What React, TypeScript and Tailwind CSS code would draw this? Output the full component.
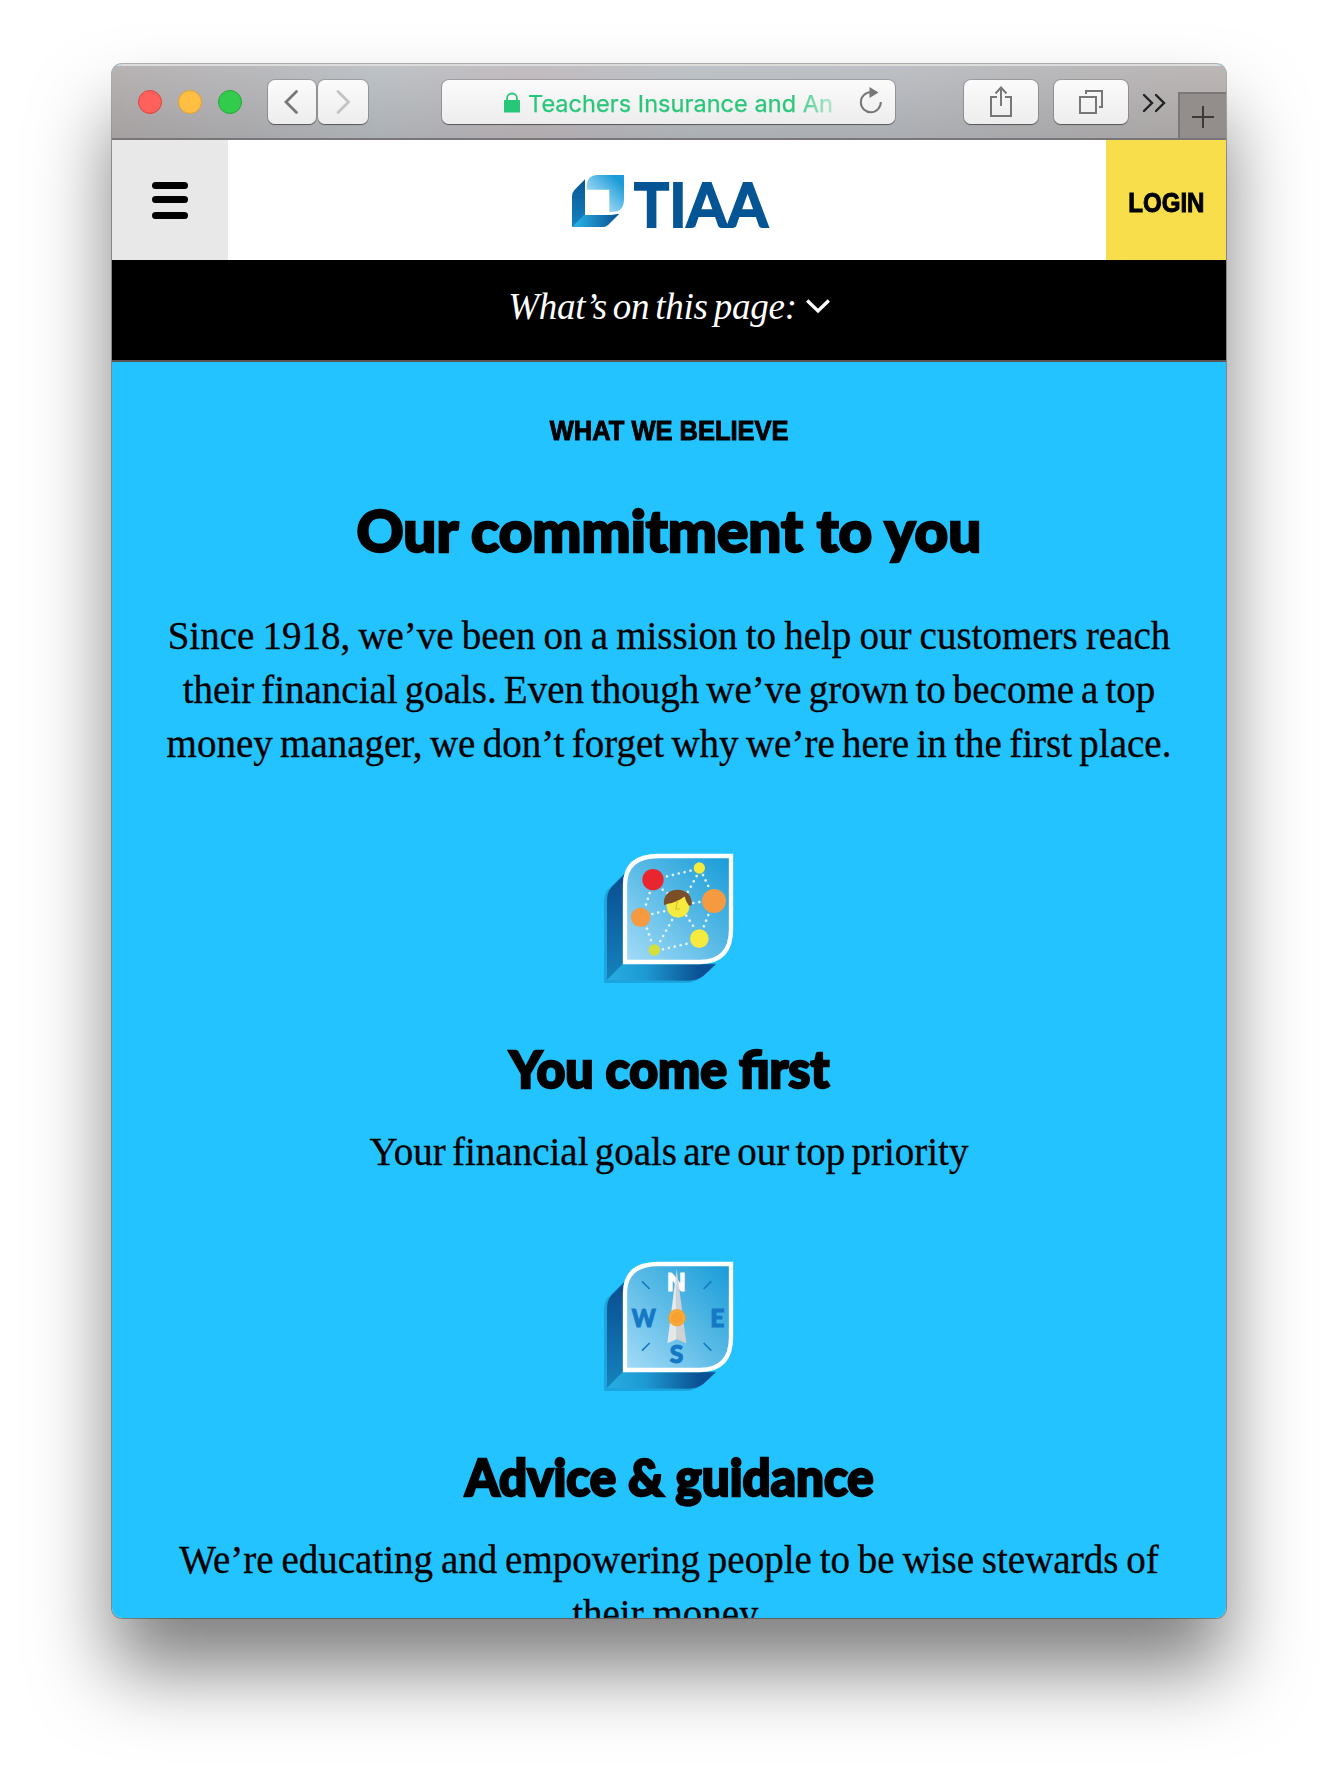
import React from "react";

function IconFrame({ id, children }: { id: string; children: React.ReactNode }) {
  return (
    <svg width="160" height="160" viewBox="0 0 480 480" className="block">
      <defs>
        <linearGradient id={id + "face"} x1="0" y1="1" x2="1" y2="0">
          <stop offset="0" stopColor="#a5dcf8" />
          <stop offset="0.5" stopColor="#5bbbe6" />
          <stop offset="1" stopColor="#159bd8" />
        </linearGradient>
        <linearGradient id={id + "side"} x1="0" y1="0" x2="0" y2="1">
          <stop offset="0.1" stopColor="#0a5192" />
          <stop offset="1" stopColor="#1583bd" />
        </linearGradient>
        <linearGradient id={id + "base"} x1="0" y1="0" x2="1" y2="0">
          <stop offset="0" stopColor="#27ade3" />
          <stop offset="0.35" stopColor="#1d9ad2" />
          <stop offset="0.85" stopColor="#0a5192" />
        </linearGradient>
      </defs>
      <path d="M42 429V185Q42 160 56 146L110 94V370H378L340 405Q318 429 285 429Z" fill="#1aa5dc" />
      <path d="M51 420V180Q51 156 66 140L112 94V370L98 373Z" fill={`url(#${id}side)`} />
      <path d="M51 420L98 373H378L340 408Q322 422 295 422Z" fill={`url(#${id}base)`} />
      <path d="M105 366V136Q105 48 205 48H423V268Q423 366 330 366Z" fill={`url(#${id}face)`} stroke="#fff" strokeWidth="13" />
      {children}
    </svg>
  );
}

function NetworkIcon() {
  return (
    <IconFrame id="net">
      <g stroke="#e2f4fc" strokeWidth="8" strokeLinecap="round" strokeDasharray="0.1 18" fill="none">
        <path d="M231 109L310 90" />
        <path d="M179 159L166 200" />
        <path d="M218 149L240 166" />
        <path d="M320 108L290 162" />
        <path d="M339 105L358 145" />
        <path d="M187 222L230 212" />
        <path d="M310 189L330 186" />
        <path d="M171 266L186 310" />
        <path d="M246 240L205 314" />
        <path d="M289 227L315 266" />
        <path d="M355 225L338 268" />
        <path d="M219 328L300 309" />
      </g>
      <circle cx="189" cy="119" r="32" fill="#e9252f" />
      <circle cx="328" cy="84" r="17" fill="#f5ea3d" />
      <circle cx="372" cy="183" r="36" fill="#f59a40" />
      <circle cx="152" cy="232" r="29" fill="#f59a40" />
      <circle cx="328" cy="296" r="28" fill="#f5ea3d" />
      <circle cx="193" cy="330" r="17.500" fill="#d5df3c" />
      <circle cx="264" cy="199" r="34" fill="#f5ea3d" />
      <path d="M222 196C218 166 238 149 263 149C290 149 308 168 305 196L297 197Q286 184 284 169Q262 188 230 192Z" fill="#7a4e27" />
      <path d="M263 181L257 207H270" fill="none" stroke="#d9b92f" strokeWidth="3" />
    </IconFrame>
  );
}

function CompassIcon() {
  return (
    <IconFrame id="cmp">
      <g stroke="#1478c4" strokeWidth="5">
        <path d="M156 100L179 123M364 100L341 123M156 308L179 285M364 308L341 285" />
      </g>
      <g fontFamily="Lato, sans-serif" fontWeight="900" fontSize="74" textAnchor="middle" fill="#1478c4" stroke="#1478c4" strokeWidth="3">
        <text x="259" y="128" fill="#fff" stroke="#fff">N</text>
        <text x="161" y="237" textLength="72" lengthAdjust="spacingAndGlyphs">W</text>
        <text x="382" y="237">E</text>
        <text x="260" y="345">S</text>
      </g>
      <path d="M260 62L232 286L260 274Z" fill="#e6e7e8" />
      <path d="M260 62L289 286L260 274Z" fill="#cfd1d3" />
      <circle cx="261" cy="209" r="26" fill="#f8a12f" />
      <circle cx="261" cy="209" r="20" fill="none" stroke="#fbb44a" strokeWidth="3" />
    </IconFrame>
  );
}

function LogoMark() {
  return (
    <svg width="52" height="52" viewBox="0 0 156 156" className="block">
      <defs>
        <linearGradient id="lt" x1="0" y1="1" x2="1" y2="0">
          <stop offset="0.2" stopColor="#b5e2fa" />
          <stop offset="0.85" stopColor="#1b9cd8" />
        </linearGradient>
        <linearGradient id="ls" x1="0" y1="0" x2="0" y2="1">
          <stop offset="0" stopColor="#075596" />
          <stop offset="1" stopColor="#1584c0" />
        </linearGradient>
        <linearGradient id="lb" x1="0" y1="0" x2="1" y2="0">
          <stop offset="0.1" stopColor="#27ade3" />
          <stop offset="1" stopColor="#075091" />
        </linearGradient>
      </defs>
      <path d="M44 44V36Q44 0 78 0H156V72Q156 111 120 111H112V44Z" fill="url(#lt)" />
      <path d="M0 156V64Q0 52 8 44L39 13V120L3 156Z" fill="url(#ls)" />
      <path d="M0 156L36 120H118L142 116L112 146Q103 156 90 156Z" fill="url(#lb)" />
    </svg>
  );
}

const toolButton =
  "flex h-[44px] items-center justify-center rounded-[7px] bg-gradient-to-b from-[#fbfbfb] to-[#ededed] shadow-[0_0_0_1px_rgba(0,0,0,0.16),0_1px_1px_rgba(0,0,0,0.4)]";

function Toolbar() {
  return (
    <div className="relative flex h-[76px] items-start border-t-2 border-b-2 border-t-[#dcdcdc] border-b-[#79767a] bg-[linear-gradient(180deg,rgba(255,255,255,0.06),rgba(0,0,0,0.08)),linear-gradient(90deg,#b3aeae_0%,#b5b5b8_12%,#babfc3_24%,#c0b9bd_37%,#babfc4_52%,#b9bcc1_70%,#b6b5b7_85%,#b8b2b1_100%)] pt-[14px]">
      <div className="ml-[26px] mt-[10px] flex gap-4">
        <div className="size-6 rounded-full border border-[#e0443f] bg-[#fe605c]" />
        <div className="size-6 rounded-full border border-[#dfa033] bg-[#ffbf43]" />
        <div className="size-6 rounded-full border border-[#22a93a] bg-[#33cb4b]" />
      </div>
      <div className="ml-[26px] flex gap-[2px]">
        <div className={toolButton + " w-[48px]"}>
          <svg width="16" height="26" viewBox="0 0 16 26" fill="none" stroke="#777" strokeWidth="2.800" strokeLinecap="round" className="-ml-[3px]">
            <path d="M13.500 2.500L3 13L13.500 23.500" />
          </svg>
        </div>
        <div className={toolButton + " w-[50px]"}>
          <svg width="16" height="26" viewBox="0 0 16 26" fill="none" stroke="#c3c3c3" strokeWidth="2.800" strokeLinecap="round">
            <path d="M3 2.500L13.500 13L3 23.500" />
          </svg>
        </div>
      </div>
      <div className={toolButton + " ml-[74px] w-[453px] justify-start!"}>
        <svg width="16" height="21" viewBox="0 0 16 21" className="ml-[62px] mt-px">
          <path d="M0 8H16V20.500H0Z" fill="#27c679" />
          <path d="M3 9V6.500A5 5 0 0 1 13 6.500V9" fill="none" stroke="#27c679" strokeWidth="1.800" />
        </svg>
        <span className="ml-[8px] mt-[3px] w-[306px] whitespace-nowrap bg-[linear-gradient(90deg,#27c679_86%,rgba(39,198,121,0.25)_100%)] bg-clip-text font-['Inter','Roboto',sans-serif] text-[23.5px] leading-[44px] tracking-[0.05px] text-transparent [-webkit-text-stroke:0.25px_rgba(39,198,121,0.4)]">
          Teachers Insurance and An
        </span>
        <svg width="24" height="28" viewBox="0 0 24 28" className="-mt-[2px] ml-[25px]">
          <path d="M11.500 5.200A10 10 0 1 0 21.800 15" fill="none" stroke="#777" strokeWidth="2" />
          <path d="M10.500 0L19.500 5.600L10.500 11Z" fill="#777" />
        </svg>
      </div>
      <div className={toolButton + " ml-[69px] w-[74px]"}>
        <svg width="24" height="32" viewBox="0 0 24 32" fill="none" stroke="#777" strokeWidth="2" className="-mt-[2px]">
          <path d="M8 12H2V31H22V12H16M12 21V3M6.500 8.500L12 2.500L17.500 8.500" />
        </svg>
      </div>
      <div className={toolButton + " ml-[16px] w-[74px]"}>
        <svg width="24" height="24" viewBox="0 0 24 24" fill="none" stroke="#777" strokeWidth="2">
          <path d="M1 7H17V23H1ZM7 4V1H23V17H20" />
        </svg>
      </div>
      <svg width="24" height="20" viewBox="0 0 24 20" fill="none" stroke="#222" strokeWidth="2.400" strokeLinecap="round" className="ml-[14px] mt-[13px]">
        <path d="M2 2L10 10L2 18M14 2L22 10L14 18" />
      </svg>
      <div className="ml-auto mt-[12px] flex h-[46px] w-[48px] items-center justify-center border-t-2 border-l-2 border-[#7b7776] bg-[#938e8c] pt-[2px]">
        <svg width="22" height="22" viewBox="0 0 22 22" stroke="#3c3938" strokeWidth="2">
          <path d="M0 11H22M11 0V22" />
        </svg>
      </div>
    </div>
  );
}

function SiteHeader() {
  return (
    <header className="flex h-[120px] bg-white">
      <div className="flex w-[116px] flex-col items-center bg-[#e8e8e8] pt-[42px]">
        <div className="h-[7px] w-9 rounded-full bg-black" />
        <div className="mt-[7px] h-[7px] w-9 rounded-full bg-black" />
        <div className="mt-[9px] h-[7px] w-9 rounded-full bg-black" />
      </div>
      <div className="flex flex-1 items-start pl-[344px]">
        <div className="mt-[35px]">
          <LogoMark />
        </div>
        <span className="mt-[25px] ml-[10px] origin-left scale-x-[0.945] font-['Lato',sans-serif] text-[62px] leading-[76px] font-bold text-[#055594] [-webkit-text-stroke:1.8px_#055594]">TIAA</span>
      </div>
      <div className="flex w-[120px] items-center justify-center bg-[#f7de4a] pt-[5px] font-['Liberation_Sans',sans-serif] text-[28px] font-bold">
        <span className="inline-block scale-x-[0.86] [-webkit-text-stroke:1px_#000]">LOGIN</span>
      </div>
    </header>
  );
}

const body = "font-['Liberation_Serif',serif] text-[39px] leading-[54px] whitespace-nowrap [-webkit-text-stroke:0.3px_#000]";
const title = "font-['Lato',sans-serif] font-black whitespace-nowrap [-webkit-text-stroke:2.4px_#000]";

export default function App() {
  return (
    <div className="h-[1778px] w-[1338px] overflow-hidden bg-white pt-16 pl-28">
      <div className="w-[1114px] rounded-[10px] shadow-[0_0_0_1px_rgba(0,0,0,0.3),0_52px_78px_rgba(0,0,0,0.5)]">
        <main className="h-[1554px] overflow-hidden rounded-[10px] bg-[#23c3ff] text-black">
          <Toolbar />
          <SiteHeader />
          <div className="flex h-[102px] justify-center border-b-2 border-[#5a5554] bg-black pt-[20px] text-white">
            <span className="font-['Liberation_Serif',serif] text-[37px] leading-[54px] tracking-[-0.25px] italic [word-spacing:-3px]">What’s on this page:</span>
            <svg width="24" height="15" viewBox="0 0 24 15" fill="none" stroke="#fff" strokeWidth="3.400" className="mt-[19px] ml-[9px]">
              <path d="M1.200 1.500L12 12L22.800 1.500" />
            </svg>
          </div>
          <section className="flex flex-col items-center pt-[53px] text-center">
            <p className="scale-x-[0.91] font-['Liberation_Sans',sans-serif] text-[28px] leading-8 font-bold [-webkit-text-stroke:1px_#000]">WHAT WE BELIEVE</p>
            <h1 className={title + " mt-[48px] scale-x-[1.005] text-[58px] leading-[70px]"}>Our commitment to you</h1>
            <div className={body + " mt-[44px] flex flex-col items-center"}>
              <span className="[word-spacing:-1.6px]">Since 1918, we’ve been on a mission to help our customers reach</span>
              <span className="[word-spacing:-2.7px]">their financial goals. Even though we’ve grown to become a top</span>
              <span className="[word-spacing:-2.4px]">money manager, we don’t forget why we’re here in the first place.</span>
            </div>
            <div className="mt-[69px] pl-[2px]"><NetworkIcon /></div>
            <h2 className={title + " mt-[38px] scale-x-[0.98] text-[51px] leading-[62px]"}>You come first</h2>
            <p className={body + " mt-[25px] [word-spacing:-3.5px]"}>Your financial goals are our top priority</p>
            <div className="mt-[69px] pl-[2px]"><CompassIcon /></div>
            <h2 className={title + " mt-[38px] scale-x-[0.967] text-[51px] leading-[62px]"}>Advice &amp; guidance</h2>
            <div className={body + " mt-[25px] flex flex-col items-center"}>
              <span className="[word-spacing:-1.9px]">We’re educating and empowering people to be wise stewards of</span>
              <span className="[word-spacing:-1px]">their money.</span>
            </div>
          </section>
        </main>
      </div>
    </div>
  );
}
